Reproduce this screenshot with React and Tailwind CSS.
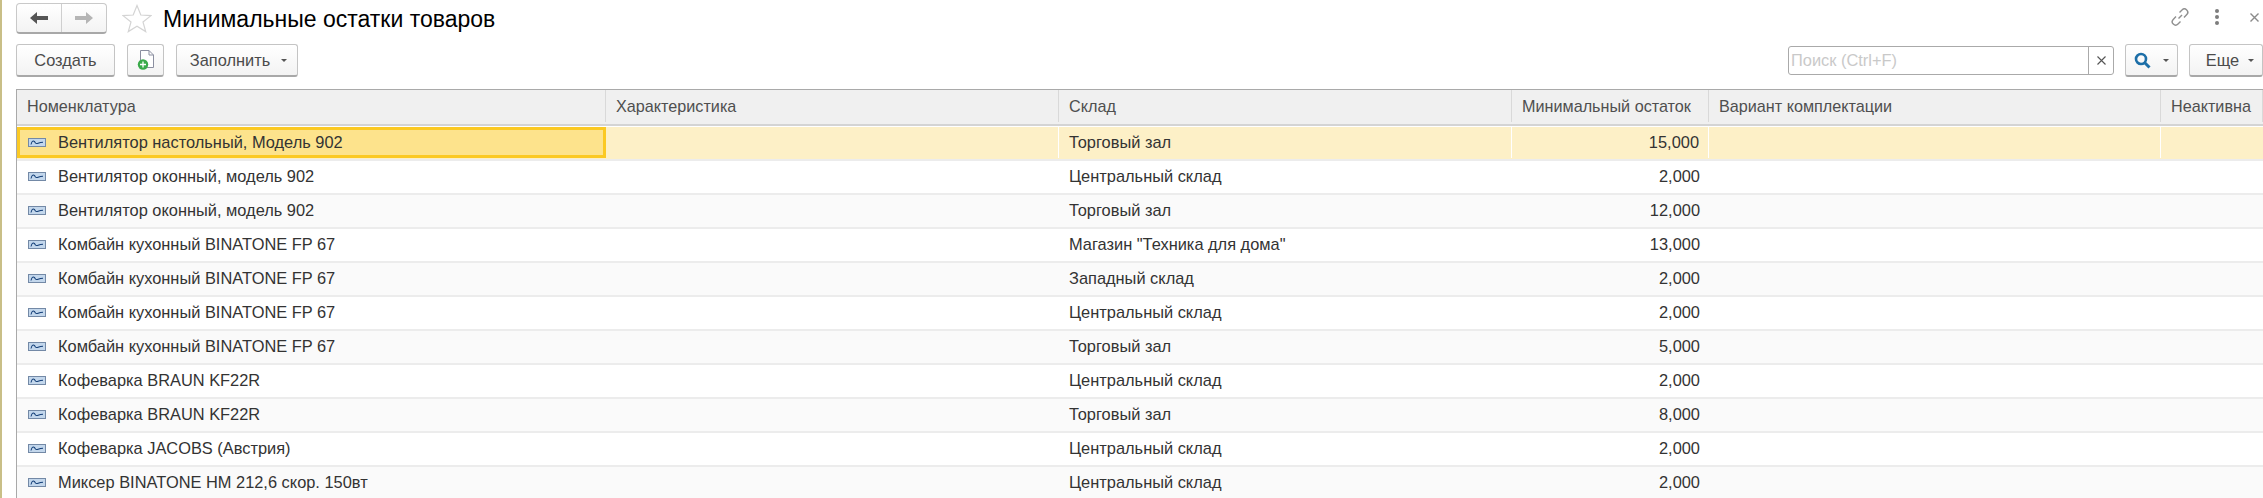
import React from "react";

const COLS = [
  "w-[589px]",
  "w-[453px]",
  "w-[453px]",
  "w-[197px]",
  "w-[452px]",
  "flex-1",
];

const HEADERS = [
  "Номенклатура",
  "Характеристика",
  "Склад",
  "Минимальный остаток",
  "Вариант комплектации",
  "Неактивна",
];

const ROWS = [
  ["Вентилятор настольный, Модель 902", "Торговый зал", "15,000"],
  ["Вентилятор оконный, модель 902", "Центральный склад", "2,000"],
  ["Вентилятор оконный, модель 902", "Торговый зал", "12,000"],
  ["Комбайн кухонный BINATONE FP 67", 'Магазин "Техника для дома"', "13,000"],
  ["Комбайн кухонный BINATONE FP 67", "Западный склад", "2,000"],
  ["Комбайн кухонный BINATONE FP 67", "Центральный склад", "2,000"],
  ["Комбайн кухонный BINATONE FP 67", "Торговый зал", "5,000"],
  ["Кофеварка BRAUN KF22R", "Центральный склад", "2,000"],
  ["Кофеварка BRAUN KF22R", "Торговый зал", "8,000"],
  ["Кофеварка JACOBS (Австрия)", "Центральный склад", "2,000"],
  ["Миксер BINATONE HM 212,6 скор. 150вт", "Центральный склад", "2,000"],
];

function ItemIcon() {
  return (
    <svg width="18" height="9" viewBox="0 0 18 9" className="shrink-0">
      <rect x="0.5" y="0.5" width="17" height="8" fill="#c3d7ec" stroke="#7389a6" />
      <path d="M3 6.5 C4 2.2 6 2.2 7.5 5 C9 6.8 10 4.2 15 4.2" fill="none" stroke="#143f78" strokeWidth="1.1" />
    </svg>
  );
}

function Caret() {
  return <span className="w-0 h-0 border-x-[3px] border-x-transparent border-t-[3px] border-t-[#555]" />;
}

function Button({ className = "", children }) {
  return (
    <div
      className={`h-[33px] flex items-center justify-center border border-[#c4c4c4] border-b-[#a8a8a8] border-b-2 rounded-[3px] bg-gradient-to-b from-white to-[#f3f3f3] text-[#4b4b4b] text-[16.4px] ${className}`}
    >
      {children}
    </div>
  );
}

function App() {
  return (
    <div className="h-[498px] overflow-hidden bg-white flex font-['Liberation_Sans',Arial,sans-serif]">
      <div className="w-[2px] shrink-0 bg-[#c9bf87]" />
      <div className="flex-1 min-w-0">
        {/* Title row */}
        <div className="h-[44px] flex items-start">
          <div className="ml-[14px] mt-[3px] w-[91px] h-[31px] flex border border-[#c9c9c9] border-b-2 border-b-[#a8a8a8] rounded-[4px] bg-gradient-to-b from-white to-[#f3f3f3]">
            <div className="w-[45px] flex items-center justify-center border-r border-[#cfcfcf]">
              <svg width="18" height="12" viewBox="0 0 18 12">
                <path d="M0 6 L7 0 V4 H18 V8 H7 V12 Z" fill="#555" />
              </svg>
            </div>
            <div className="flex-1 flex items-center justify-center">
              <svg width="18" height="12" viewBox="0 0 18 12">
                <path d="M18 6 L11 0 V4 H0 V8 H11 V12 Z" fill="#b5b5b5" />
              </svg>
            </div>
          </div>
          <svg width="30" height="29" viewBox="0 0 30 29" className="ml-[15px] mt-[4px]">
            <path
              d="M15 1.5 L18.8 11 L29 11.6 L21 18 L23.7 27.6 L15 22.2 L6.3 27.6 L9 18 L1 11.6 L11.2 11 Z"
              fill="#fff"
              stroke="#d4d4d4"
              strokeWidth="1.2"
            />
          </svg>
          <div className="ml-[11px] mt-[1px] text-[23px] leading-[36px] text-black whitespace-nowrap">
            Минимальные остатки товаров
          </div>
          <div className="ml-auto flex items-center mt-[7px]">
            <svg width="20" height="20" viewBox="0 0 20 20" fill="none" stroke="#8f8f8f" strokeWidth="1.4">
              <path d="M8.5 11.5 L12 8" />
              <path d="M9.5 5.5 L12 3 a3.2 3.2 0 0 1 4.8 4.6 L14 10.4" />
              <path d="M10.5 14.5 L8 17 a3.2 3.2 0 0 1 -4.8 -4.6 L6 9.6" />
            </svg>
            <div className="ml-[25px] flex flex-col gap-[2px]">
              <span className="w-[4px] h-[4px] rounded-full bg-[#7d7d7d]" />
              <span className="w-[4px] h-[4px] rounded-full bg-[#7d7d7d]" />
              <span className="w-[4px] h-[4px] rounded-full bg-[#7d7d7d]" />
            </div>
            <svg width="9" height="9" viewBox="0 0 9 9" className="ml-[31px] mr-[4px]" stroke="#8a8a8a" strokeWidth="1.4">
              <path d="M0.5 0.5 L8.5 8.5 M8.5 0.5 L0.5 8.5" />
            </svg>
          </div>
        </div>

        {/* Toolbar */}
        <div className="h-[45px] flex items-start">
          <Button className="ml-[14px] w-[99px]">Создать</Button>
          <Button className="ml-[12px] w-[37px]">
            <svg width="18" height="20" viewBox="0 0 18 20">
              <path d="M3.5 0.5 H12 L16.5 5 V17.5 H3.5 Z" fill="#fff" stroke="#8b8fa0" />
              <path d="M12 0.5 V5 H16.5" fill="none" stroke="#8b8fa0" />
              <circle cx="6" cy="14.5" r="5.2" fill="#3aaa4a" />
              <path d="M3 14.5 H9 M6 11.5 V17.5" stroke="#fff" strokeWidth="1.3" />
            </svg>
          </Button>
          <Button className="ml-[12px] w-[122px] gap-[11px] pl-[3px]">
            <span>Заполнить</span>
            <Caret />
          </Button>
          <div className="ml-auto mt-[2px] w-[326px] h-[29px] flex border border-[#aaaaaa] rounded-[3px] bg-white">
            <div className="flex-1 pl-[2px] text-[16.4px] leading-[27px] text-[#c9c9c9]">Поиск (Ctrl+F)</div>
            <div className="w-[25px] flex items-center justify-center border-l border-[#aaaaaa]">
              <svg width="9" height="9" viewBox="0 0 9 9" stroke="#555" strokeWidth="1.1">
                <path d="M0.5 0.5 L8.5 8.5 M8.5 0.5 L0.5 8.5" />
              </svg>
            </div>
          </div>
          <Button className="ml-[11px] w-[53px] gap-[12px]">
            <svg width="17" height="17" viewBox="0 0 17 17" fill="none" stroke="#1d6fa8">
              <circle cx="7" cy="7" r="5" strokeWidth="2.6" />
              <path d="M10.5 10.5 L15.5 15.5" strokeWidth="3" />
            </svg>
            <Caret />
          </Button>
          <Button className="ml-[11px] w-[74px] gap-[9px] pl-[8px]">
            <span>Еще</span>
            <Caret />
          </Button>
        </div>

        {/* Table */}
        <div className="ml-[14px] border-l border-t border-[#a9a9a9]">
          <div className="flex h-[36px] pb-[2px] bg-[#f0f0f0] border-b-2 border-[#d4d4d4] text-[#4f4f4f] text-[16.2px]">
            {HEADERS.map((title, i) => (
              <div
                key={title}
                className={`${COLS[i]} shrink-0 flex items-center pl-[10px] whitespace-nowrap overflow-hidden border-r border-[#d9d9d9]`}
              >
                {title}
              </div>
            ))}
          </div>
          {ROWS.map(([name, store, qty], i) => {
            const selected = i === 0;
            const cell = `shrink-0 flex items-center whitespace-nowrap ${selected ? "border-r border-r-white" : ""}`;
            return (
              <div
                key={i}
                className={`flex h-[34px] pb-[1px] border-b-2 border-b-[#ececec] text-[#333] text-[16.4px] ${
                  selected ? "bg-[#fdf0c7] mt-[1px]" : i % 2 === 1 ? "bg-white" : "bg-[#fafafa]"
                }`}
              >
                <div
                  className={`${COLS[0]} shrink-0 flex items-center whitespace-nowrap gap-[12px] ${
                    selected ? "bg-[#fde38c] border-[3px] border-[#fbc923] pl-[8px]" : "pl-[11px]"
                  }`}
                >
                  <ItemIcon />
                  <span>{name}</span>
                </div>
                <div className={`${COLS[1]} ${cell}`} />
                <div className={`${COLS[2]} ${cell} pl-[10px]`}>{store}</div>
                <div className={`${COLS[3]} ${cell} justify-end pr-[9px]`}>{qty}</div>
                <div className={`${COLS[4]} ${cell}`} />
                <div className="flex-1" />
              </div>
            );
          })}
        </div>
      </div>
    </div>
  );
}

export default App;
